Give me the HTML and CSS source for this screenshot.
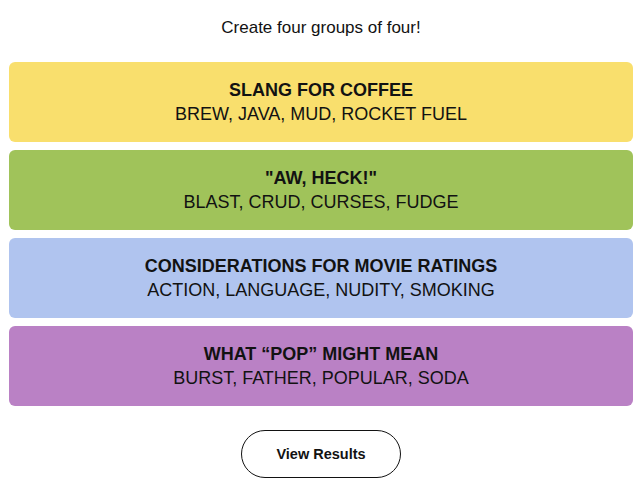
FILE: index.html
```html
<!doctype html>
<html lang="en">
    <head>
        <meta charset="UTF-8" />
        <meta name="viewport" content="width=device-width, initial-scale=1.0" />
        <title>Connections</title>
        <link rel="stylesheet" href="styles.css">
    </head>
    <body>
        <main class="board">
            <p class="prompt">Create four groups of four!</p>
            <section class="groups">
                <div class="group yellow">
                    <h3>SLANG FOR COFFEE</h3>
                    <p>BREW, JAVA, MUD, ROCKET FUEL</p>
                </div>
                <div class="group green">
                    <h3>"AW, HECK!"</h3>
                    <p>BLAST, CRUD, CURSES, FUDGE</p>
                </div>
                <div class="group blue">
                    <h3>CONSIDERATIONS FOR MOVIE RATINGS</h3>
                    <p>ACTION, LANGUAGE, NUDITY, SMOKING</p>
                </div>
                <div class="group purple">
                    <h3>WHAT “POP” MIGHT MEAN</h3>
                    <p>BURST, FATHER, POPULAR, SODA</p>
                </div>
            </section>
            <div class="controls">
                <button type="button">View Results</button>
            </div>
        </main>
    </body>
</html>
```

FILE: styles.css
```css
body {
    font-family: "Liberation Sans", Arial, sans-serif;
    color: #121212;
    background: #fff;
    margin: 0;
    padding: 0;
}
.board {
    padding: 0 9px;
}
.prompt {
    margin: 0;
    padding-top: 18px;
    height: 62px;
    box-sizing: border-box;
    text-align: center;
    font-size: 17px;
    line-height: 20px;
}
.groups {
    display: flex;
    flex-direction: column;
    gap: 8px;
}
.group {
    height: 80px;
    border-radius: 6px;
    display: flex;
    flex-direction: column;
    justify-content: center;
    align-items: center;
    text-align: center;
}
.group h3 {
    margin: 0;
    font-size: 18px;
    line-height: 24px;
    font-weight: bold;
}
.group p {
    margin: 0;
    font-size: 18px;
    line-height: 24px;
}
.yellow {
    background: #f9df6d;
}
.green {
    background: #a0c35a;
}
.blue {
    background: #b0c4ef;
}
.purple {
    background: #ba81c5;
}
.controls {
    display: flex;
    justify-content: center;
    padding-top: 24px;
}
button {
    width: 160px;
    height: 48px;
    border: 1px solid #121212;
    border-radius: 24px;
    background: #fff;
    color: #121212;
    font-family: inherit;
    font-size: 14.5px;
    font-weight: bold;
    cursor: pointer;
}
```
